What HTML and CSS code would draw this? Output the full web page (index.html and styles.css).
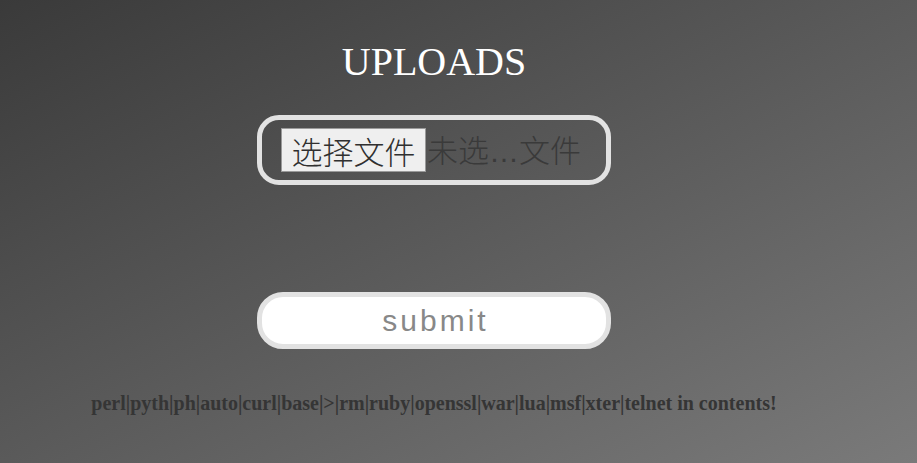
FILE: index.html
```html
<!DOCTYPE html>
<html lang="zh">
<head>
<meta charset="utf-8">
<title>UPLOADS</title>
<link rel="stylesheet" href="styles.css">
</head>
<body>
<div class="page">
  <h1 class="title">UPLOADS</h1>
  <form class="upload-form">
    <label class="file-box">
      <span class="file-btn">选择文件</span>
      <span class="file-name">未选<span class="ellipsis">…</span>文件</span>
    </label>
    <button type="button" class="submit">submit</button>
  </form>
  <p class="warning">perl|pyth|ph|auto|curl|base|&gt;|rm|ruby|openssl|war|lua|msf|xter|telnet in contents!</p>
</div>
</body>
</html>
```
FILE: styles.css
```css
html, body {
  margin: 0;
  height: 100%;
}
body {
  background: linear-gradient(to bottom right, #3a3a3a, #7a7a7a);
  font-family: "Liberation Serif", serif;
  overflow: hidden;
}
.page {
  width: 868px;
  display: flex;
  flex-direction: column;
  align-items: center;
}
.title {
  margin: 39px 0 0;
  font-family: "Liberation Serif", serif;
  font-weight: normal;
  font-size: 40px;
  line-height: 46px;
  color: #ffffff;
}
.upload-form {
  display: flex;
  flex-direction: column;
  align-items: center;
}
.file-box {
  margin-top: 30px;
  box-sizing: border-box;
  width: 354px;
  height: 70px;
  border: 5px solid #e2e2e2;
  border-radius: 22px;
  padding: 0 0 0 19px;
  display: flex;
  align-items: center;
  font-family: "Noto Sans CJK SC", sans-serif;
  font-size: 31px;
  font-weight: 300;
}
.file-btn {
  box-sizing: border-box;
  height: 44px;
  width: 145px;
  display: flex;
  align-items: center;
  justify-content: center;
  background: #efefef;
  border: 1px solid #9a9a9a;
  color: #303030;
  line-height: 1;
}
.file-name {
  margin-left: 1px;
  color: #3a3a3a;
  line-height: 1;
  white-space: nowrap;
}
.ellipsis {
  font-family: "Liberation Sans", sans-serif;
  font-size: 30px;
}
.submit {
  margin-top: 107px;
  box-sizing: border-box;
  width: 354px;
  height: 57px;
  border: 5px solid #e2e2e2;
  border-radius: 26px;
  background: #ffffff;
  color: #888888;
  font-family: "Liberation Sans", Arial, sans-serif;
  font-size: 30px;
  letter-spacing: 3px;
  padding: 0 0 0 3px;
}
.warning {
  margin: 43px 0 0;
  font-family: "Liberation Serif", serif;
  font-weight: bold;
  font-size: 20px;
  line-height: 23px;
  color: #353535;
  text-align: center;
  white-space: nowrap;
}
```
